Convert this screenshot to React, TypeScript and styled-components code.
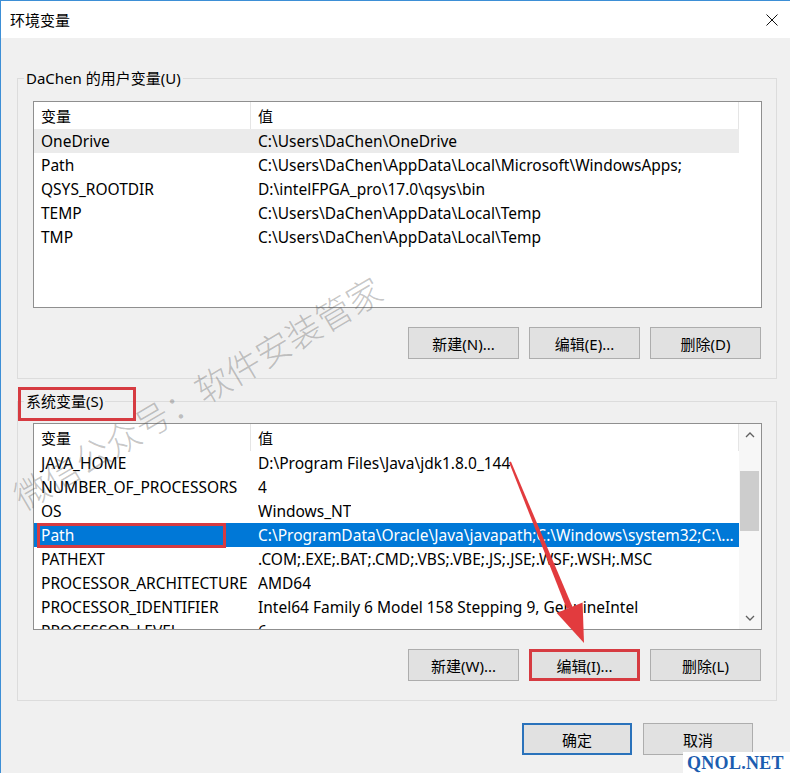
import React from 'react';
import styled, { createGlobalStyle, css } from 'styled-components';

const GlobalStyle = createGlobalStyle`
  html, body {
    margin: 0;
    padding: 0;
  }
  body {
    width: 790px;
    height: 773px;
    overflow: hidden;
    background: #f0f0f0;
    font-family: 'Noto Sans', 'Noto Sans CJK SC', sans-serif;
    font-size: 15.5px;
    color: #000;
  }
`;

const Window = styled.div`
  position: relative;
  width: 790px;
  height: 773px;
  box-sizing: border-box;
  border-top: 1px solid #3d8fd6;
  border-left: 1px solid #3d8fd6;
  background: #f0f0f0;
  display: flex;
  flex-direction: column;
  overflow: hidden;
`;

const TitleBar = styled.div`
  height: 37px;
  flex-shrink: 0;
  background: #fff;
  display: flex;
  align-items: center;
  justify-content: space-between;
  padding: 0 12px 0 9px;
`;

const Title = styled.span`
  font-size: 15px;
  line-height: 20px;
`;

const Body = styled.div`
  display: flex;
  flex-direction: column;
  padding: 40px 13px 0 16px;
`;

const Group = styled.div<{ $second?: boolean }>`
  display: flex;
  flex-direction: column;
  border: 1px solid #dcdcdc;
  padding: 0 14px 19px 15px;
  margin-top: ${({ $second }) => ($second ? '22px' : '0')};
`;

const Legend = styled.span<{ $marked?: boolean }>`
  position: relative;
  align-self: flex-start;
  margin: -11px 0 0 -9px;
  padding: 0 2px;
  font-size: 15px;
  line-height: 20px;
  background: #f0f0f0;
  ${({ $marked }) =>
    $marked &&
    css`
      &::after {
        content: '';
        position: absolute;
        left: -6px;
        top: -4px;
        right: -31px;
        bottom: -10px;
        border: 3px solid #d63b41;
      }
    `}
`;

const ListBox = styled.div<{ $gap: number }>`
  margin-top: ${({ $gap }) => $gap}px;
  height: 207px;
  box-sizing: border-box;
  border: 1px solid #8f8f8f;
  background: #fff;
  display: flex;
  overflow: hidden;
`;

const ListMain = styled.div`
  width: 705px;
  display: flex;
  flex-direction: column;
  overflow: hidden;
`;

const HeaderRow = styled.div`
  height: 27px;
  flex-shrink: 0;
  display: flex;
  align-items: stretch;
  font-size: 15px;
`;

const Row = styled.div<{ $state?: 'selected' | 'dim' }>`
  height: 24px;
  flex-shrink: 0;
  display: flex;
  align-items: center;
  background: ${({ $state }) =>
    $state === 'selected' ? '#0078d7' : $state === 'dim' ? '#ebebeb' : 'transparent'};
  color: ${({ $state }) => ($state === 'selected' ? '#fff' : '#000')};
`;

const NameCell = styled.div<{ $head?: boolean; $marked?: boolean }>`
  position: relative;
  width: 217px;
  flex-shrink: 0;
  box-sizing: border-box;
  padding-left: 7px;
  white-space: nowrap;
  display: flex;
  align-items: center;
  align-self: stretch;
  ${({ $head }) => $head && 'border-right: 1px solid #e5e5e5;'}
  ${({ $marked }) =>
    $marked &&
    css`
      &::after {
        content: '';
        position: absolute;
        left: 3px;
        top: 0;
        width: 189px;
        height: 25px;
        box-sizing: border-box;
        border: 3px solid #d63b41;
      }
    `}
`;

const ValueCell = styled.div<{ $head?: boolean }>`
  flex: 1;
  min-width: 0;
  padding-left: 7px;
  white-space: nowrap;
  overflow: hidden;
  display: flex;
  align-items: center;
  align-self: stretch;
  ${({ $head }) => $head && 'border-right: 1px solid #e5e5e5;'}
`;

const ValueText = styled.span`
  overflow: hidden;
  text-overflow: ellipsis;
`;

const ScrollCol = styled.div<{ $active?: boolean }>`
  width: 22px;
  flex-shrink: 0;
  display: flex;
  flex-direction: column;
  background: ${({ $active }) => ($active ? '#f7f7f7' : '#fff')};
`;

const ScrollArrow = styled.div`
  height: 22px;
  display: flex;
  align-items: center;
  justify-content: center;
`;

const ScrollTrack = styled.div`
  flex: 1;
`;

const ScrollThumb = styled.div`
  margin: 25px 2px 0 1px;
  height: 60px;
  background: #cdcdcd;
`;

const ButtonRow = styled.div`
  display: flex;
  justify-content: flex-end;
  gap: 10px;
  margin: 19px 1px 0 0;
`;

const Footer = styled.div`
  display: flex;
  justify-content: flex-end;
  gap: 11px;
  margin-top: 22px;
  padding-right: 24px;
`;

const Button = styled.button<{ $marked?: boolean; $primary?: boolean; $w?: number }>`
  width: ${({ $w }) => $w ?? 111}px;
  height: 32px;
  box-sizing: border-box;
  padding: 0;
  background: #e1e1e1;
  border: 1px solid #adadad;
  font-family: inherit;
  font-size: 15px;
  color: #000;
  ${({ $primary }) => $primary && 'border: 2px solid #2a72bb;'}
  ${({ $marked }) => $marked && 'border: 3px solid #d63b41;'}
`;

const Watermark = styled.div`
  position: absolute;
  left: -14px;
  top: 373px;
  width: 420px;
  text-align: center;
  font-family: 'Noto Sans CJK SC', sans-serif;
  font-weight: 300;
  font-size: 35px;
  line-height: 36px;
  white-space: nowrap;
  color: rgba(80, 80, 80, 0.33);
  transform: rotate(-30.5deg);
  pointer-events: none;
`;

const Overlay = styled.svg`
  position: absolute;
  left: -1px;
  top: -1px;
  pointer-events: none;
`;

const Badge = styled.div`
  position: absolute;
  right: 0;
  bottom: 0;
  width: 103px;
  height: 21px;
  padding-left: 4px;
  background: #fff;
  font-family: 'Liberation Serif', serif;
  font-weight: 700;
  font-size: 18px;
  line-height: 22px;
  letter-spacing: 0.3px;
  color: #1c5db0;
`;

const Chevron = ({ down }: { down?: boolean }) => (
  <svg width="10" height="6" viewBox="0 0 10 6">
    <polyline
      points={down ? '1,1 5,5 9,1' : '1,5 5,1 9,5'}
      fill="none"
      stroke="#606060"
      strokeWidth="1.3"
    />
  </svg>
);

type Item = { name: string; value: string; state?: 'selected' | 'dim'; marked?: boolean };

const userVars: Item[] = [
  { name: 'OneDrive', value: 'C:\\Users\\DaChen\\OneDrive', state: 'dim' },
  { name: 'Path', value: 'C:\\Users\\DaChen\\AppData\\Local\\Microsoft\\WindowsApps;' },
  { name: 'QSYS_ROOTDIR', value: 'D:\\intelFPGA_pro\\17.0\\qsys\\bin' },
  { name: 'TEMP', value: 'C:\\Users\\DaChen\\AppData\\Local\\Temp' },
  { name: 'TMP', value: 'C:\\Users\\DaChen\\AppData\\Local\\Temp' },
];

const sysVars: Item[] = [
  { name: 'JAVA_HOME', value: 'D:\\Program Files\\Java\\jdk1.8.0_144' },
  { name: 'NUMBER_OF_PROCESSORS', value: '4' },
  { name: 'OS', value: 'Windows_NT' },
  {
    name: 'Path',
    value: 'C:\\ProgramData\\Oracle\\Java\\javapath;C:\\Windows\\system32;C:\\...',
    state: 'selected',
    marked: true,
  },
  { name: 'PATHEXT', value: '.COM;.EXE;.BAT;.CMD;.VBS;.VBE;.JS;.JSE;.WSF;.WSH;.MSC' },
  { name: 'PROCESSOR_ARCHITECTURE', value: 'AMD64' },
  { name: 'PROCESSOR_IDENTIFIER', value: 'Intel64 Family 6 Model 158 Stepping 9, GenuineIntel' },
  { name: 'PROCESSOR_LEVEL', value: '6' },
];

const VarList = ({ items, gap, scroll }: { items: Item[]; gap: number; scroll?: boolean }) => (
  <ListBox $gap={gap}>
    <ListMain>
      <HeaderRow>
        <NameCell $head>变量</NameCell>
        <ValueCell $head>值</ValueCell>
      </HeaderRow>
      {items.map((it) => (
        <Row key={it.name + it.value} $state={it.state}>
          <NameCell $marked={it.marked}>{it.name}</NameCell>
          <ValueCell>
            <ValueText>{it.value}</ValueText>
          </ValueCell>
        </Row>
      ))}
    </ListMain>
    <ScrollCol $active={scroll}>
      {scroll && (
        <>
          <ScrollArrow>
            <Chevron />
          </ScrollArrow>
          <ScrollTrack>
            <ScrollThumb />
          </ScrollTrack>
          <ScrollArrow>
            <Chevron down />
          </ScrollArrow>
        </>
      )}
    </ScrollCol>
  </ListBox>
);

// red annotation arrow pointing from the selected row to the edit button
const Arrow = () => (
  <Overlay width="790" height="773" viewBox="0 0 790 773">
    <polygon points="510.9,461.6 509.1,462.4 566.8,608.9 572.4,606.7" fill="#e23b3e" />
    <polygon points="556.7,613.1 582.6,602.5 584,643" fill="#e23b3e" />
  </Overlay>
);

export default function App() {
  return (
    <>
      <GlobalStyle />
      <Window>
        <TitleBar>
          <Title>环境变量</Title>
          <svg width="12" height="12" viewBox="0 0 12 12">
            <path d="M0.5 0.5 L11.5 11.5 M11.5 0.5 L0.5 11.5" stroke="#111" strokeWidth="1" />
          </svg>
        </TitleBar>
        <Body>
          <Group>
            <Legend>DaChen 的用户变量(U)</Legend>
            <VarList items={userVars} gap={13} />
            <ButtonRow>
              <Button>新建(N)...</Button>
              <Button>编辑(E)...</Button>
              <Button>删除(D)</Button>
            </ButtonRow>
          </Group>
          <Group $second>
            <Legend $marked>系统变量(S)</Legend>
            <VarList items={sysVars} gap={12} scroll />
            <ButtonRow>
              <Button>新建(W)...</Button>
              <Button $marked>编辑(I)...</Button>
              <Button>删除(L)</Button>
            </ButtonRow>
          </Group>
          <Footer>
            <Button $primary $w={110}>
              确定
            </Button>
            <Button $w={110}>取消</Button>
          </Footer>
        </Body>
        <Watermark>微信公众号：软件安装管家</Watermark>
        <Arrow />
        <Badge>QNOL.NET</Badge>
      </Window>
    </>
  );
}
